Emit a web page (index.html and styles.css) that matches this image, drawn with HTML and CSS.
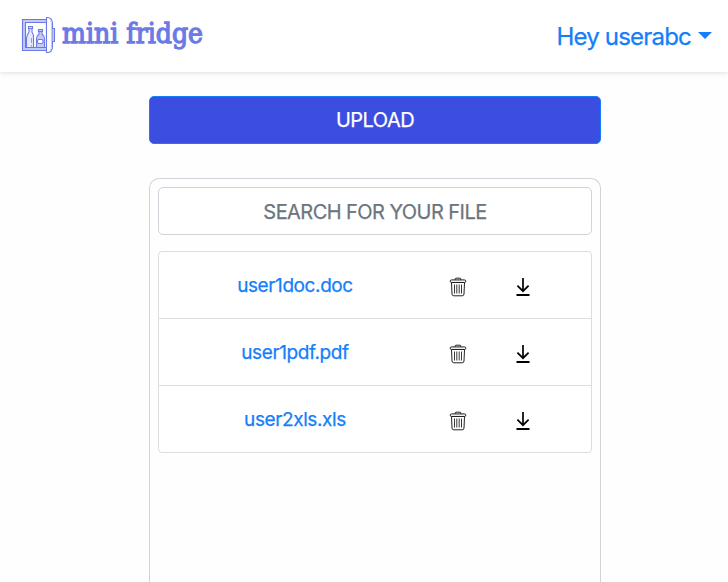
FILE: index.html
```html
<!DOCTYPE html>
<html lang="en">
<head>
<meta charset="utf-8">
<title>mini fridge</title>
<link rel="stylesheet" href="styles.css">
</head>
<body>
<svg class="sprite" aria-hidden="true">
  <symbol id="trash" viewBox="0 0 18 20">
    <g fill="none" stroke="#222" stroke-width="1">
      <path d="M6.2 2.8V2Q6.2 1.2 7 1.2H11Q11.8 1.2 11.8 2V2.8"/>
      <rect x="1.2" y="2.9" width="15.6" height="2.6" rx="1.3" fill="#eee"/>
      <path d="M2.5 5.5L3 17Q3.1 18.8 4.8 18.8H13.2Q14.9 18.8 15 17L15.5 5.5"/>
      <path d="M5.5 7.5V16.5M7.8 7.5V16.5M10.2 7.5V16.5M12.5 7.5V16.5" stroke-width=".9"/>
    </g>
  </symbol>
  <symbol id="download" viewBox="0 0 16 20">
    <path d="M8 1V14M2.4 8.6L8 14.2L13.6 8.6" fill="none" stroke="#000" stroke-width="1.7"/>
    <path d="M1.5 18H14.5" stroke="#000" stroke-width="2"/>
  </symbol>
</svg>
<header class="navbar">
  <a class="brand">
    <svg width="200" height="52" viewBox="20 12 200 52">
      <g fill="none" stroke="#6c7ae6" stroke-width="1.1">
        <path d="M46.5 19.5H22.5V50.5H46.5" fill="#c3caf8"/>
        <path d="M46.5 22.5H25.5V47.5H46.5Z" fill="#fff"/>
        <path d="M46.5 17.5H48Q52.5 18 52.5 24V46Q52.5 52 48 52.5H46.5Z" fill="#fff"/>
        <path d="M50 19Q51.5 21 51.5 24V46Q51.5 49 50 51" stroke="#c3caf8"/>
        <path d="M52.5 28.5H54.5V41.5H52.5" fill="#c3caf8"/>
        <path d="M28.5 26.5H32.5V28.5H28.5ZM29 28.5V32Q27 35 26.5 38V47.5H33.5V38Q34 35 32 32V28.5" fill="#e7eafe"/>
        <path d="M31.5 38V43M31.5 45V46.5" stroke="#8f9aee"/>
        <path d="M38.5 29.5H42.5V31.5H38.5ZM39 31.5V34Q36.5 36 36.5 39V47.5H44.5V39Q44.5 36 42 34V31.5" fill="#c3caf8"/>
        <rect x="37.5" y="39.5" width="5.5" height="4" rx="1.5" fill="#fff"/>
      </g>
      <text class="brand-text" x="62" y="42.5" textLength="141" lengthAdjust="spacingAndGlyphs">mini fridge</text>
    </svg>
  </a>
  <a class="user">Hey userabc<span class="caret"></span></a>
</header>
<main class="content">
  <button class="upload">UPLOAD</button>
  <section class="panel">
    <input class="search" type="text" placeholder="SEARCH FOR YOUR FILE">
    <ul class="files">
      <li><a>user1doc.doc</a><svg class="trash"><use href="#trash"/></svg><svg class="download"><use href="#download"/></svg></li>
      <li><a>user1pdf.pdf</a><svg class="trash"><use href="#trash"/></svg><svg class="download"><use href="#download"/></svg></li>
      <li><a>user2xls.xls</a><svg class="trash"><use href="#trash"/></svg><svg class="download"><use href="#download"/></svg></li>
    </ul>
  </section>
</main>
</body>
</html>
```
FILE: styles.css
```css
* { box-sizing: border-box; }
body {
  margin: 0;
  height: 100vh;
  display: flex;
  flex-direction: column;
  background: #fefefe;
  font-family: Inter, "Liberation Sans", sans-serif;
}
.sprite { display: none; }
.navbar {
  display: flex;
  flex: none;
  justify-content: space-between;
  align-items: flex-start;
  height: 72px;
  padding: 12px 16px 0 20px;
  background: #fff;
  box-shadow: 0 1px 5px rgba(0, 0, 0, .13);
}
.brand svg { display: block; }
.brand-text {
  font: 27.5px "DejaVu Serif", serif;
  fill: #6c7ae6;
  stroke: #6c7ae6;
  stroke-width: 1.3px;
}
.user {
  display: flex;
  align-items: center;
  height: 48px;
  font-size: 24px;
  letter-spacing: -.8px;
  color: #147efb;
  -webkit-text-stroke: .25px #147efb;
}
.caret {
  margin: -1px 0 0 7px;
  border: 7px solid transparent;
  border-top-color: #147efb;
  border-bottom: 0;
}
.content {
  display: flex;
  flex: 1;
  flex-direction: column;
  width: 452px;
  margin: 24px 0 0 149px;
}
.upload {
  flex: none;
  width: 100%;
  height: 48px;
  padding: 0;
  border: 1px solid #147efb;
  border-radius: 5px;
  background: #3c4ee0;
  color: #fff;
  font: 20px Inter, sans-serif;
  letter-spacing: -.5px;
  -webkit-text-stroke: .25px #fff;
}
.panel {
  flex: 1;
  margin-top: 34px;
  padding: 8px 8px 0;
  border: 1px solid #ced4da;
  border-bottom: 0;
  border-radius: 10px 10px 0 0;
}
.search {
  display: block;
  width: 100%;
  height: 48px;
  padding: 2px 16px 0;
  border: 1px solid #ced4da;
  border-radius: 5px;
  background: #fff;
  font: 20px Inter, sans-serif;
  letter-spacing: -.55px;
  text-align: center;
}
.search::placeholder {
  color: #6c757d;
  opacity: 1;
  -webkit-text-stroke: .25px #6c757d;
}
.files {
  margin: 16px 0 0;
  padding: 0;
  list-style: none;
  border: 1px solid #dcdedf;
  border-radius: 4px;
  background: #fff;
}
.files li {
  display: grid;
  grid-template-columns: 270px 57px 73px;
  align-items: center;
  justify-items: center;
  height: 67px;
  border-bottom: 1px solid #dcdedf;
}
.files li:last-child { height: 66px; border-bottom: 0; }
.files a {
  padding-left: 2px;
  font-size: 19px;
  letter-spacing: -.4px;
  color: #147efb;
  -webkit-text-stroke: .25px #147efb;
}
.trash { width: 18px; height: 20px; margin-top: 3px; }
.download { width: 16px; height: 20px; margin-top: 3px; }
```
